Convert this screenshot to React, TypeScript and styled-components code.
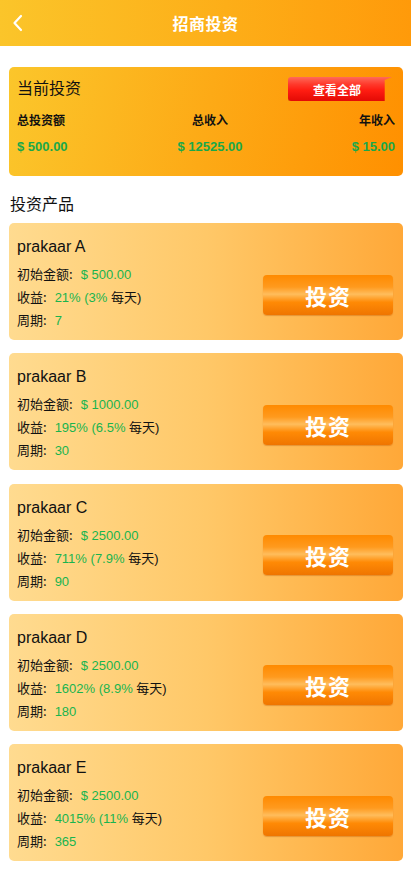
import React from "react";
import styled, { createGlobalStyle } from "styled-components";

const Global = createGlobalStyle`
  html, body { margin: 0; padding: 0; background: #fff; }
  body { font-family: "Liberation Sans", "Noto Sans CJK SC", Arial, sans-serif; color: #111; }
  * { box-sizing: border-box; }
`;

const Page = styled.div`
  width: 411px;
  min-height: 893px;
  background: #fff;
`;

const Header = styled.header`
  height: 46px;
  display: flex;
  align-items: center;
  justify-content: center;
  position: relative;
  background: linear-gradient(90deg, #fbc52a 0%, #fdae18 55%, #ff9a0a 100%);
`;

const Back = styled.button`
  position: absolute;
  left: 6px;
  top: 14px;
  width: 24px;
  height: 18px;
  padding: 0;
  border: 0;
  background: transparent;
  display: flex;
  align-items: center;
  justify-content: center;
  svg { display: block; }
`;

const Title = styled.h1`
  margin: 0;
  font-size: 16px;
  font-weight: bold;
  color: #fff;
  font-family: "Noto Sans CJK SC", sans-serif;
  letter-spacing: 0.5px;
`;

const Content = styled.main`
  padding: 21px 8px 20px 9px;
  display: flex;
  flex-direction: column;
`;

const Summary = styled.section`
  border-radius: 5px;
  background: linear-gradient(100deg, #fbc62b 0%, #fdaa16 50%, #ff9000 100%);
  padding: 9px 8px 21px 8px;
  display: flex;
  flex-direction: column;
`;

const SummaryTop = styled.div`
  display: flex;
  justify-content: space-between;
  align-items: center;
  height: 24px;
`;

const SummaryTitle = styled.div`
  font-size: 16px;
  line-height: 20px;
  font-family: "Noto Sans CJK SC", sans-serif;
  color: #111;
  margin-top: -2px;
`;

const ViewAll = styled.div`
  position: relative;
  width: 104px;
  height: 24px;
  margin-right: 3px;
  margin-top: 2px;
  display: flex;
  align-items: center;
  justify-content: center;
  color: #fff;
  font-size: 12px;
  font-weight: bold;
  font-family: "Noto Sans CJK SC", sans-serif;
  padding-right: 6px;
  background: linear-gradient(180deg, #ff6a5a 0%, #ff3a2c 30%, #ff1d12 55%, #e30a05 100%);
  border-radius: 3px 0 0 3px;
  clip-path: polygon(0 0, 100% 0, 93% 12%, 93% 100%, 0 100%);
  box-shadow: 0 1px 1px rgba(0,0,0,0.2);
`;

const Grid = styled.div`
  display: grid;
  grid-template-columns: 1fr 1fr 1fr;
  margin-top: 12px;
  row-gap: 11px;
`;

const Cell = styled.div<{ $align: "left" | "center" | "right"; $value?: boolean }>`
  text-align: ${(p) => p.$align};
  font-size: ${(p) => (p.$value ? "13px" : "12px")};
  font-weight: bold;
  color: ${(p) => (p.$value ? "#19a84a" : "#111")};
  font-family: ${(p) => (p.$value ? `"Liberation Sans", Arial, sans-serif` : `"Noto Sans CJK SC", sans-serif`)};
  line-height: 16px;
  height: 16px;
  ${(p) => (p.$align === "center" ? "padding-left: 8px;" : "")}
`;

const SectionTitle = styled.h2`
  margin: 17px 0 10px 1px;
  font-size: 16px;
  font-weight: normal;
  font-family: "Noto Sans CJK SC", sans-serif;
  color: #111;
  line-height: 20px;
`;

const List = styled.div`
  display: flex;
  flex-direction: column;
  gap: 13.3px;
`;

const Card = styled.div`
  height: 117px;
  border-radius: 5px;
  background: linear-gradient(90deg, #ffdb90 0%, #ffc868 50%, #ffa838 100%);
  padding: 14px 10px 0 8px;
  display: flex;
  align-items: center;
  justify-content: space-between;
`;

const Info = styled.div`
  display: flex;
  flex-direction: column;
  align-self: flex-start;
`;

const Name = styled.div`
  font-size: 16px;
  line-height: 20px;
  height: 20px;
  color: #111;
  margin-bottom: 5px;
`;

const Row = styled.div`
  font-size: 13px;
  line-height: 23px;
  height: 23px;
  color: #111;
  display: flex;
  align-items: baseline;
`;

const Label = styled.span`
  font-family: "Noto Sans CJK SC", sans-serif;
  line-height: 23px;
  margin-right: 8px;
`;

const Green = styled.span`
  color: #19b44e;
  line-height: 23px;
`;

const Dark = styled.span`
  color: #111;
  line-height: 23px;
  font-family: "Liberation Sans", "Noto Sans CJK SC", sans-serif;
`;

const InvestButton = styled.button`
  width: 130px;
  height: 40px;
  margin-top: 12px;
  border: 0;
  border-radius: 4px;
  color: #fff;
  font-size: 22px;
  font-weight: bold;
  font-family: "Noto Sans CJK SC", sans-serif;
  background: linear-gradient(180deg, #ff8a00 0%, #ff9a1e 30%, #ffbd5c 48%, #ff8a05 68%, #ef7500 100%);
  box-shadow: 0 1px 1px rgba(180, 80, 0, 0.35);
  letter-spacing: 1px;
  display: flex;
  align-items: center;
  justify-content: center;
  padding: 0;
`;

const products = [
  { name: "prakaar A", amount: "$ 500.00", rate: "21%", daily: "(3%", days: "7" },
  { name: "prakaar B", amount: "$ 1000.00", rate: "195%", daily: "(6.5%", days: "30" },
  { name: "prakaar C", amount: "$ 2500.00", rate: "711%", daily: "(7.9%", days: "90" },
  { name: "prakaar D", amount: "$ 2500.00", rate: "1602%", daily: "(8.9%", days: "180" },
  { name: "prakaar E", amount: "$ 2500.00", rate: "4015%", daily: "(11%", days: "365" },
];

export default function App() {
  return (
    <Page>
      <Global />
      <Header>
        <Back aria-label="back">
          <svg width="14" height="18" viewBox="0 0 14 18">
            <path d="M10 2 L3.5 9 L10 16" stroke="#fff" strokeWidth="2.2" fill="none" strokeLinecap="round" strokeLinejoin="round" />
          </svg>
        </Back>
        <Title>招商投资</Title>
      </Header>
      <Content>
        <Summary>
          <SummaryTop>
            <SummaryTitle>当前投资</SummaryTitle>
            <ViewAll>查看全部</ViewAll>
          </SummaryTop>
          <Grid>
            <Cell $align="left">总投资额</Cell>
            <Cell $align="center">总收入</Cell>
            <Cell $align="right">年收入</Cell>
            <Cell $align="left" $value>$ 500.00</Cell>
            <Cell $align="center" $value>$ 12525.00</Cell>
            <Cell $align="right" $value>$ 15.00</Cell>
          </Grid>
        </Summary>
        <SectionTitle>投资产品</SectionTitle>
        <List>
          {products.map((p) => (
            <Card key={p.name}>
              <Info>
                <Name>{p.name}</Name>
                <Row>
                  <Label>初始金额:</Label>
                  <Green>{p.amount}</Green>
                </Row>
                <Row>
                  <Label>收益:</Label>
                  <Green>
                    {p.rate} {p.daily}&nbsp;
                  </Green>
                  <Dark>每天)</Dark>
                </Row>
                <Row>
                  <Label>周期:</Label>
                  <Green>{p.days}</Green>
                </Row>
              </Info>
              <InvestButton>投资</InvestButton>
            </Card>
          ))}
        </List>
      </Content>
    </Page>
  );
}
